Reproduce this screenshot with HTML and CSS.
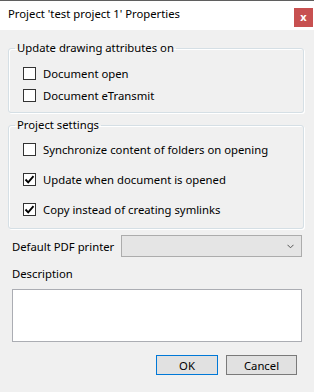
FILE: index.html
```html
<!DOCTYPE html>
<html lang="en">
  <head>
    <meta charset="UTF-8" />
    <title>Project Properties</title>
    <link rel="stylesheet" href="styles.css">
  </head>
  <body>
    <div class="dialog">
      <div class="titlebar">
        <span class="title">Project 'test project 1' Properties</span>
        <span class="close">x</span>
      </div>

      <div class="content">
        <fieldset class="group group-update">
          <legend>Update drawing attributes on</legend>
          <label class="check-row"><span class="box"></span>Document open</label>
          <label class="check-row"><span class="box"></span>Document eTransmit</label>
        </fieldset>

        <fieldset class="group group-project">
          <legend>Project settings</legend>
          <label class="check-row"><span class="box"></span>Synchronize content of folders on opening</label>
          <label class="check-row">
            <span class="box checked">
              <svg width="11" height="11" viewBox="0 0 11 11"><path d="M1.5 5.5 L4.2 8.3 L9.5 2.2" fill="none" stroke="#000" stroke-width="1.9"/></svg>
            </span>Update when document is opened
          </label>
          <label class="check-row">
            <span class="box checked">
              <svg width="11" height="11" viewBox="0 0 11 11"><path d="M1.5 5.5 L4.2 8.3 L9.5 2.2" fill="none" stroke="#000" stroke-width="1.9"/></svg>
            </span>Copy instead of creating symlinks
          </label>
        </fieldset>

        <div class="printer-row">
          <span class="field-label">Default PDF printer</span>
          <div class="select">
            <svg width="7" height="5" viewBox="0 0 7 5"><path d="M0.5 0.8 L3.5 3.8 L6.5 0.8" fill="none" stroke="#555" stroke-width="1"/></svg>
          </div>
        </div>

        <div class="desc-label">Description</div>
        <div class="textarea"></div>

        <div class="buttons">
          <button class="btn btn-default">OK</button>
          <button class="btn">Cancel</button>
        </div>
      </div>
    </div>
  </body>
</html>
```

FILE: styles.css
```css
/* Global */
body {
  margin: 0;
  background: #f0f0f0;
  font-family: "Noto Sans", "Open Sans", sans-serif;
  font-size: 11.3px;
  color: #000;
}

.dialog {
  border-top: 1px solid #5f5f5f;
  height: 391px;
}

/* Title bar */
.titlebar {
  height: 29px;
  background: #fff;
  display: flex;
  justify-content: space-between;
  align-items: flex-start;
  padding-left: 8px;
  box-sizing: border-box;
}

.title {
  line-height: 16px;
  margin-top: 5px;
}

.close {
  width: 19px;
  height: 19px;
  margin-top: 7px;
  margin-right: 1px;
  background: #c75050;
  color: #fff;
  font-weight: bold;
  font-size: 11px;
  line-height: 17px;
  text-align: center;
}

/* Content */
.content {
  padding: 10px 10px 0 8px;
  display: flex;
  flex-direction: column;
}

/* Group boxes */
.group {
  margin: 0;
  padding: 0;
  border: 1px solid #d5dfe5;
  border-radius: 3px;
  box-shadow: inset 1px 1px 0 #fff, 1px 1px 0 #fff;
}

.group legend {
  margin-left: 6px;
  padding: 0 2px;
  line-height: 16px;
}

.group-update {
  padding-top: 6px;
  padding-bottom: 6px;
}

.group-update .check-row {
  height: 22px;
}

.group-project {
  margin-top: 4px;
  padding-top: 1px;
  padding-bottom: 4px;
}

.group-project .check-row {
  height: 30px;
}

/* Checkboxes */
.check-row {
  display: flex;
  align-items: center;
  gap: 7px;
  padding-left: 14px;
}

.box {
  width: 13px;
  height: 13px;
  box-sizing: border-box;
  border: 1px solid #333;
  background: #fff;
  display: flex;
  align-items: center;
  justify-content: center;
}

/* Printer */
.printer-row {
  display: flex;
  align-items: center;
  margin-top: 6px;
  padding-left: 4px;
  padding-right: 2px;
}

.field-label {
  width: 109px;
}

.select {
  flex: 1;
  height: 22px;
  box-sizing: border-box;
  border: 1px solid #acacac;
  background: #e5e5e5;
  display: flex;
  align-items: center;
  justify-content: flex-end;
  padding-right: 7px;
}

/* Description */
.desc-label {
  margin: 9px 0 0 4px;
  line-height: 16px;
}

.textarea {
  margin: 7px 2px 0 4px;
  height: 53px;
  box-sizing: border-box;
  border: 1px solid #abadb3;
  background: #fff;
}

/* Buttons */
.buttons {
  display: flex;
  justify-content: flex-end;
  gap: 8px;
  margin-top: 13px;
  margin-right: 7px;
}

.btn {
  height: 20px;
  padding: 0;
  background: #e1e1e1;
  border: 1px solid #7a7a7a;
  font: inherit;
  color: #000;
}

.btn-default {
  width: 62px;
  border-color: #0078d7;
}

.btn + .btn {
  width: 71px;
}
```
